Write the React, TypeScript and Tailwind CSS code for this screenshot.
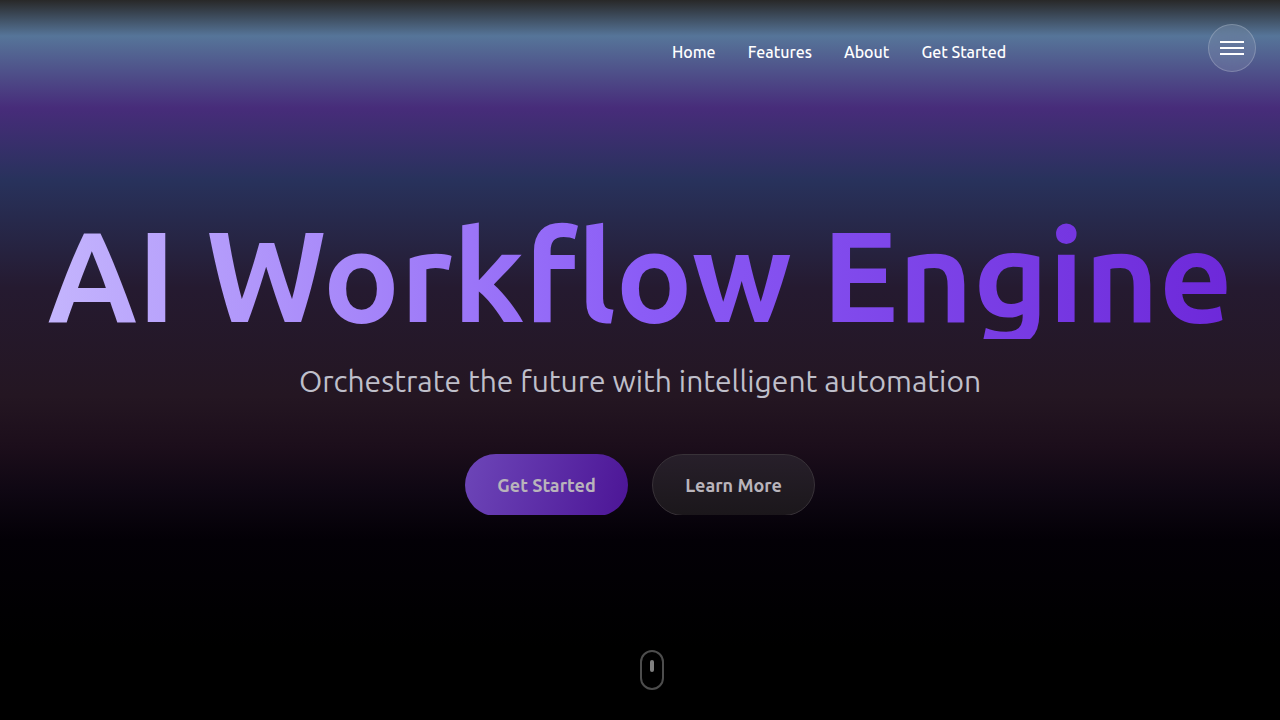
const navLinks = [
  { label: "Home", href: "#home" },
  { label: "Features", href: "#features" },
  { label: "About", href: "#about" },
  { label: "Get Started", href: "#start" },
];

function Header() {
  return (
    <header className="flex h-24 items-start justify-between pt-6 pr-6 pl-[52.5%]">
      <nav aria-label="Main" className="pt-4">
        <ul className="flex gap-8">
          {navLinks.map((link) => (
            <li key={link.label}>
              <a href={link.href} className="block text-base leading-6 font-medium whitespace-nowrap text-white">
                {link.label}
              </a>
            </li>
          ))}
        </ul>
      </nav>
      <button
        type="button"
        aria-label="Open menu"
        className="flex size-12 flex-col items-center justify-center gap-1 rounded-full border border-white/20 bg-white/10 backdrop-blur-md"
      >
        <span className="h-0.5 w-6 bg-white" />
        <span className="h-0.5 w-6 bg-white" />
        <span className="h-0.5 w-6 bg-white" />
      </button>
    </header>
  );
}

function Hero() {
  return (
    <main className="flex flex-1 flex-col items-center px-12 pt-[115px] text-center">
      <h1 className="bg-linear-[90deg] from-[#c4b5fd] via-[#8b5cf6] to-[#6d28d9] bg-clip-text text-[128px] leading-none font-bold whitespace-nowrap text-transparent">
        AI Workflow Engine
      </h1>
      <p className="mt-6 text-[30px] leading-9 font-normal text-[#bfbfca]">
        Orchestrate the future with intelligent automation
      </p>
      <div className="mt-[55px] flex h-[61px] gap-6 overflow-hidden text-lg font-semibold text-[#b9b4bb]">
        <button type="button" className="h-[62px] w-[163px] rounded-full bg-linear-[105deg] from-[#6d46b8] to-[#4c1596]">
          Get Started
        </button>
        <button
          type="button"
          className="h-[62px] w-[163px] rounded-full border border-[#383238] bg-linear-to-b from-[#271f2a] to-[#1b171b]"
        >
          Learn More
        </button>
      </div>
    </main>
  );
}

function ScrollHint() {
  return (
    <footer className="flex justify-center pb-[30px] pl-6">
      <div className="flex h-10 w-6 justify-center rounded-full border-2 border-[#4d4d4d] pt-2">
        <span className="h-3 w-1 rounded-full bg-[#808080]" />
      </div>
    </footer>
  );
}

export default function App() {
  return (
    <div className="flex min-h-screen flex-col bg-[linear-gradient(to_bottom,#282828_0%,#567599_5%,#472c7a_15%,#28325c_25%,#251a30_40%,#241622_55%,#1c0e1b_62%,#0f0713_68%,#030006_75%,#000000_90%)] font-['Ubuntu','Noto_Sans',sans-serif]">
      <Header />
      <Hero />
      <ScrollHint />
    </div>
  );
}
